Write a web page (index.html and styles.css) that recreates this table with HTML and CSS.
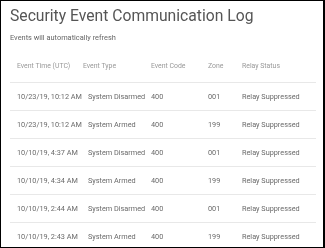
FILE: index.html
```html
<!DOCTYPE html>
<html>
<head>
<meta charset="utf-8">
<link rel="stylesheet" href="styles.css">
</head>
<body>
<div class="frame">
  <h1 class="title">Security Event Communication Log</h1>
  <p class="note">Events will automatically refresh</p>
  <div class="log">
    <div class="row head">
      <div class="c-time">Event Time (UTC)</div>
      <div class="c-type">Event Type</div>
      <div class="c-code">Event Code</div>
      <div class="c-zone">Zone</div>
      <div class="c-status">Relay Status</div>
    </div>
    <div class="row">
      <div class="c-time">10/23/19, 10:12 AM</div>
      <div class="c-type">System Disarmed</div>
      <div class="c-code">400</div>
      <div class="c-zone">001</div>
      <div class="c-status">Relay Suppressed</div>
    </div>
    <div class="row">
      <div class="c-time">10/23/19, 10:12 AM</div>
      <div class="c-type">System Armed</div>
      <div class="c-code">400</div>
      <div class="c-zone">199</div>
      <div class="c-status">Relay Suppressed</div>
    </div>
    <div class="row">
      <div class="c-time">10/10/19, 4:37 AM</div>
      <div class="c-type">System Disarmed</div>
      <div class="c-code">400</div>
      <div class="c-zone">001</div>
      <div class="c-status">Relay Suppressed</div>
    </div>
    <div class="row">
      <div class="c-time">10/10/19, 4:34 AM</div>
      <div class="c-type">System Armed</div>
      <div class="c-code">400</div>
      <div class="c-zone">199</div>
      <div class="c-status">Relay Suppressed</div>
    </div>
    <div class="row">
      <div class="c-time">10/10/19, 2:44 AM</div>
      <div class="c-type">System Disarmed</div>
      <div class="c-code">400</div>
      <div class="c-zone">001</div>
      <div class="c-status">Relay Suppressed</div>
    </div>
    <div class="row">
      <div class="c-time">10/10/19, 2:43 AM</div>
      <div class="c-type">System Armed</div>
      <div class="c-code">400</div>
      <div class="c-zone">199</div>
      <div class="c-status">Relay Suppressed</div>
    </div>
  </div>
</div>
</body>
</html>
```
FILE: styles.css
```css
html, body {
  margin: 0;
  padding: 0;
  background: #fff;
}
body {
  font-family: Roboto, "Liberation Sans", sans-serif;
  color: #6a6a6a;
  -webkit-font-smoothing: antialiased;
}
.frame {
  box-sizing: border-box;
  width: 325px;
  height: 248px;
  overflow: hidden;
  border: 1px solid #000;
  border-right-width: 2px;
  padding: 6px 7px 0 9px;
  will-change: transform;
}
.title {
  margin: 0;
  font-size: 15.7px;
  line-height: 18px;
  font-weight: 400;
  color: #555;
}
.note {
  margin: 8px 0 0;
  font-size: 7.4px;
  line-height: 10px;
  color: #666;
}
.log {
  margin-top: 18px;
  font-size: 7.3px;
  line-height: 10px;
}
.row {
  display: flex;
  align-items: center;
  height: 27px;
  padding-left: 7px;
  border-bottom: 1px solid #e8e8e8;
  white-space: nowrap;
}
.row.head {
  height: 21px;
  align-items: flex-start;
  font-size: 6.9px;
  color: #999;
}
.c-time {
  flex: 0 0 71px;
  min-width: max-content;
  padding-right: 2px;
  box-sizing: border-box;
}
.head .c-time {
  flex-basis: 66px;
}
.c-type {
  flex: 0 1 63px;
  min-width: 0;
}
.head .c-type {
  flex-basis: 68px;
}
.c-code {
  flex: 0 0 57px;
}
.c-zone {
  flex: 0 0 34px;
}
.c-status {
  flex: 1 1 auto;
}
```
